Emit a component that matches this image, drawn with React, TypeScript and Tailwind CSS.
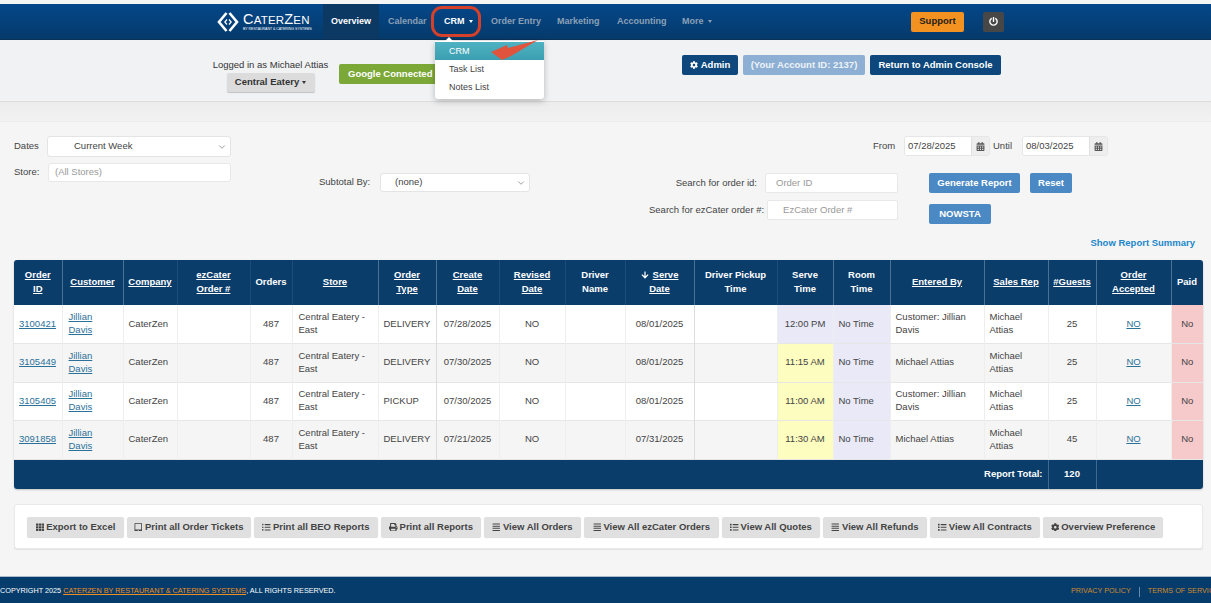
import { FaCog, FaTh, FaPrint, FaListUl, FaAlignJustify, FaList, FaCalendarAlt, FaPowerOff, FaArrowDown, FaTabletAlt } from 'react-icons/fa'
import { ChevronDown } from 'lucide-react'
import type { ReactNode } from 'react'

type Order = {
  id: string
  store: string
  type: string
  created: string
  serveDate: string
  serveTime: string
  enteredBy: string
  guests: string
  serveColor: string
  shaded: boolean
}

const orders: Order[] = [
  { id: '3100421', store: 'Central Eatery - East', type: 'DELIVERY', created: '07/28/2025', serveDate: '08/01/2025', serveTime: '12:00 PM', enteredBy: 'Customer: Jillian Davis', guests: '25', serveColor: 'bg-[#e9e9f7]', shaded: false },
  { id: '3105449', store: 'Central Eatery - East', type: 'DELIVERY', created: '07/30/2025', serveDate: '08/01/2025', serveTime: '11:15 AM', enteredBy: 'Michael Attias', guests: '25', serveColor: 'bg-[#fdfdc0]', shaded: true },
  { id: '3105405', store: 'Central Eatery - East', type: 'PICKUP', created: '07/30/2025', serveDate: '08/01/2025', serveTime: '11:00 AM', enteredBy: 'Customer: Jillian Davis', guests: '25', serveColor: 'bg-[#fdfdc0]', shaded: false },
  { id: '3091858', store: 'Central Eatery - East', type: 'DELIVERY', created: '07/21/2025', serveDate: '07/31/2025', serveTime: '11:30 AM', enteredBy: 'Michael Attias', guests: '45', serveColor: 'bg-[#fdfdc0]', shaded: true },
]

const columns: { label: ReactNode; width: string; link: boolean; strong: boolean }[] = [
  { label: <>Order<br />ID</>, width: 'w-[48px]', link: true, strong: true },
  { label: 'Customer', width: 'w-[61px]', link: true, strong: true },
  { label: 'Company', width: 'w-[54px]', link: true, strong: false },
  { label: <>ezCater<br />Order #</>, width: 'w-[73px]', link: true, strong: false },
  { label: 'Orders', width: 'w-[42px]', link: false, strong: false },
  { label: 'Store', width: 'w-[86px]', link: true, strong: true },
  { label: <>Order<br />Type</>, width: 'w-[58px]', link: true, strong: true },
  { label: <>Create<br />Date</>, width: 'w-[63px]', link: true, strong: false },
  { label: <>Revised<br />Date</>, width: 'w-[66px]', link: true, strong: false },
  { label: <>Driver<br />Name</>, width: 'w-[60px]', link: false, strong: false },
  { label: <><FaArrowDown className="inline text-[8px] mr-1 mb-px" /><u>Serve</u><br /><u>Date</u></>, width: 'w-[69px]', link: false, strong: true },
  { label: <>Driver Pickup<br />Time</>, width: 'w-[83px]', link: false, strong: false },
  { label: <>Serve<br />Time</>, width: 'w-[56px]', link: false, strong: true },
  { label: <>Room<br />Time</>, width: 'w-[57px]', link: false, strong: true },
  { label: 'Entered By', width: 'w-[94px]', link: true, strong: true },
  { label: 'Sales Rep', width: 'w-[64px]', link: true, strong: true },
  { label: '#Guests', width: 'w-[48px]', link: true, strong: true },
  { label: <>Order<br />Accepted</>, width: 'w-[75px]', link: true, strong: true },
  { label: 'Paid', width: 'w-[32px]', link: false, strong: true },
]

const navItems = [
  { label: 'Calendar', cls: 'ml-[9px] w-[38px]' },
  { label: 'Order Entry', cls: 'ml-[17px] w-[48px]' },
  { label: 'Marketing', cls: 'ml-[18px] w-[42px]' },
  { label: 'Accounting', cls: 'ml-[18px] w-[48px]' },
]

const tools: { icon: ReactNode; label: string; width: string }[] = [
  { icon: <FaTh />, label: 'Export to Excel', width: 'w-[97px]' },
  { icon: <FaTabletAlt />, label: 'Print all Order Tickets', width: 'w-[124px]' },
  { icon: <FaListUl />, label: 'Print all BEO Reports', width: 'w-[124px]' },
  { icon: <FaPrint />, label: 'Print all Reports', width: 'w-[100px]' },
  { icon: <FaAlignJustify />, label: 'View All Orders', width: 'w-[97px]' },
  { icon: <FaAlignJustify />, label: 'View All ezCater Orders', width: 'w-[135px]' },
  { icon: <FaList />, label: 'View All Quotes', width: 'w-[98px]' },
  { icon: <FaAlignJustify />, label: 'View All Refunds', width: 'w-[104px]' },
  { icon: <FaList />, label: 'View All Contracts', width: 'w-[110px]' },
  { icon: <FaCog />, label: 'Overview Preference', width: 'w-[120px]' },
]

function Logo() {
  return (
    <div className="flex items-center gap-[4px] w-[93px] font-normal">
      <svg width="22" height="22" viewBox="0 0 22 22" fill="none" stroke="#fff" className="shrink-0">
        <path d="M9.5 2 L2 11 L9.5 20" strokeWidth="2.6" />
        <path d="M12.5 2 L20 11 L12.5 20" strokeWidth="2.6" />
        <path d="M10 8.5 L7.8 11 L10 13.5" strokeWidth="1.2" />
        <path d="M12 8.5 L14.2 11 L12 13.5" strokeWidth="1.2" />
      </svg>
      <div className="text-white leading-none">
        <div className="text-[14.5px] tracking-[0.2px] whitespace-nowrap">C<span className="text-[11.5px]">ATER</span>Z<span className="text-[11.5px]">EN</span></div>
        <div className="text-[3.5px] mt-[2px] whitespace-nowrap">BY RESTAURANT &amp; CATERING SYSTEMS</div>
      </div>
    </div>
  )
}

function NavBar() {
  return (
    <div className="relative h-[36px] mt-[4px] bg-gradient-to-b from-[#04478a] to-[#053a6a] border-b border-[#0a3158] flex items-stretch text-[9px] font-bold text-[#8ba0b6]">
      <div className="ml-[217px] flex items-center"><Logo /></div>
      <div className="ml-[13px] w-[56px] bg-[#0c3864] text-white flex items-center justify-center">Overview</div>
      <div className={`${navItems[0].cls} flex items-center whitespace-nowrap`}>{navItems[0].label}</div>
      <div className="ml-[18px] w-[30px] text-white flex items-center whitespace-nowrap">
        CRM<span className="ml-[4px] border-x-[2.5px] border-x-transparent border-t-[3px] border-t-white" />
      </div>
      {navItems.slice(1).map(item => (
        <div key={item.label} className={`${item.cls} flex items-center whitespace-nowrap`}>{item.label}</div>
      ))}
      <div className="ml-[17px] flex items-center w-[31px]">
        More<span className="ml-[4px] border-x-[2.5px] border-x-transparent border-t-[3px] border-t-[#8ba0b6]" />
      </div>
      <div className="ml-[198px] flex items-center">
        <div className="w-[53px] h-[20px] rounded-[2px] bg-[#f39220] text-[#1d1d1d] flex items-center justify-center text-[9.5px]">Support</div>
      </div>
      <div className="ml-[19px] flex items-center">
        <div className="w-[21px] h-[20px] rounded-[2px] bg-[#474747] text-white flex items-center justify-center text-[9px]"><FaPowerOff /></div>
      </div>
    </div>
  )
}

function CrmMenu() {
  return (
    <div className="absolute left-[435px] top-[41px] w-[109px] h-[58px] bg-white rounded-b-[3px] shadow-[0_2px_6px_rgba(0,0,0,0.25)] text-[9px] text-[#444] z-10 pt-px">
      <div className="h-[18px] bg-gradient-to-b from-[#4fb2c2] to-[#3c9fb1] text-white pl-[14px] pt-px flex items-center">CRM</div>
      <div className="h-[18px] pl-[14px] pt-px flex items-center">Task List</div>
      <div className="h-[18px] pl-[14px] pt-px flex items-center">Notes List</div>
    </div>
  )
}

function Annotations() {
  return (
    <>
      <div className="absolute left-[431px] top-[6px] w-[50px] h-[31px] rounded-[11px] border-[3px] border-[#d5402b] z-20" />
      <div className="absolute left-[445px] top-[37px] border-x-[4px] border-x-transparent border-b-[4px] border-b-white z-10" />
      <svg className="absolute left-[488px] top-[38px] z-20" width="56" height="24" viewBox="0 0 56 24">
        <polygon points="3,14 19,7 20,10 50,2 23,18 14,22" fill="#e0533d" />
      </svg>
    </>
  )
}

function SubHeader() {
  return (
    <div className="h-[62px] bg-[#f1f2f3] border-b border-[#dcdcdc] flex text-[9.5px] text-[#333]">
      <div className="ml-[212px] mt-[19px] w-[117px] flex flex-col items-center">
        <div className="whitespace-nowrap leading-[12px]">Logged in as Michael Attias</div>
        <div className="mt-[2px] w-[88px] h-[19px] rounded-[2px] bg-[#dcdcdc] shadow-[0_1px_1px_rgba(0,0,0,0.2)] font-bold text-[#333] flex items-center justify-center">
          Central Eatery<span className="ml-[3px] border-x-[2.5px] border-x-transparent border-t-[3px] border-t-[#333]" />
        </div>
      </div>
      <div className="ml-[10px] mt-[24px] w-[100px] h-[20px] rounded-[2px] bg-[#7ca838] text-white font-bold flex items-center pl-[9px] whitespace-nowrap">Google Connected</div>
      <div className="ml-[243px] mt-[15px] flex gap-[5px] text-white font-bold">
        <div className="w-[56px] h-[20px] rounded-[2px] bg-[#0d477c] flex items-center justify-center gap-[3px]"><FaCog className="text-[8px]" />Admin</div>
        <div className="w-[122px] h-[20px] rounded-[2px] bg-[#8cafd3] text-[#eef3f8] flex items-center justify-center">(Your Account ID: 2137)</div>
        <div className="w-[131px] h-[20px] rounded-[2px] bg-[#0d477c] flex items-center justify-center">Return to Admin Console</div>
      </div>
    </div>
  )
}

function SelectBox({ value, width, height, pad }: { value: string; width: string; height: string; pad: string }) {
  return (
    <div className={`${width} ${height} ${pad} bg-white rounded-[3px] border border-[#e4e4e4] flex items-center justify-between pr-[3px] text-[#444]`}>
      {value}<ChevronDown size={10} strokeWidth={1.5} className="text-[#666]" />
    </div>
  )
}

function DateInput({ value }: { value: string }) {
  return (
    <div className="w-[86px] h-[20px] flex rounded-[3px] border border-[#e6e6e6] overflow-hidden text-[#444]">
      <div className="flex-1 bg-white pl-[3px] flex items-center">{value}</div>
      <div className="w-[18px] bg-[#eeeeee] border-l border-[#e0e0e0] flex items-center justify-center text-[#555] text-[9px]"><FaCalendarAlt /></div>
    </div>
  )
}

function BlueButton({ label, width }: { label: string; width: string }) {
  return (
    <div className={`${width} h-[20px] rounded-[2px] bg-[#4a89c3] text-white font-bold flex items-center justify-center`}>{label}</div>
  )
}

function Filters() {
  return (
    <div className="h-[114px] flex text-[9.5px] text-[#444]">
      <div className="ml-[14px] w-[217px] pt-[14px]">
        <div className="flex items-center">
          <span className="w-[33px]">Dates</span>
          <SelectBox value="Current Week" width="w-[184px]" height="h-[21px]" pad="pl-[26px]" />
        </div>
        <div className="flex items-center mt-[6px]">
          <span className="w-[34px]">Store:</span>
          <div className="w-[183px] h-[19px] bg-white rounded-[3px] border border-[#e8e8e8] pl-[6px] flex items-center text-[#999]">(All Stores)</div>
        </div>
      </div>
      <div className="ml-[88px] w-[211px] pt-[51px]">
        <div className="flex items-center">
          <span className="w-[61px] whitespace-nowrap">Subtotal By:</span>
          <SelectBox value="(none)" width="w-[150px]" height="h-[19px]" pad="pl-[14px]" />
        </div>
      </div>
      <div className="ml-[119px] w-[546px] pt-[14px]">
        <div className="flex items-center ml-[224px]">
          <span className="w-[31px]">From</span>
          <DateInput value="07/28/2025" />
          <span className="ml-[3px] w-[29px]">Until</span>
          <DateInput value="08/03/2025" />
        </div>
        <div className="flex mt-[17px]">
          <div className="w-[249px] flex items-center justify-end">
            <span className="mr-[8px] whitespace-nowrap">Search for order id:</span>
            <div className="w-[133px] h-[20px] bg-white rounded-[2px] border border-[#e8e8e8] pl-[10px] flex items-center text-[#999]">Order ID</div>
          </div>
          <div className="ml-[31px] flex gap-[10px]">
            <BlueButton label="Generate Report" width="w-[91px]" />
            <BlueButton label="Reset" width="w-[42px]" />
          </div>
        </div>
        <div className="flex mt-[7px]">
          <div className="w-[249px] h-[20px] flex items-center justify-end">
            <span className="mr-[3px] whitespace-nowrap">Search for ezCater order #:</span>
            <div className="w-[133px] h-[20px] bg-white rounded-[2px] border border-[#e8e8e8] pl-[15px] flex items-center text-[#999]">EzCater Order #</div>
          </div>
          <div className="ml-[31px] mt-[4px]">
            <BlueButton label="NOWSTA" width="w-[62px]" />
          </div>
        </div>
      </div>
    </div>
  )
}

function OrdersTable() {
  const cell = 'border-r border-[#eeeeee] px-[5px] pb-[2px] leading-[13px] align-middle'
  return (
    <div className="ml-[14px] mr-[8px] rounded-[3px] overflow-hidden shadow-[0_1px_2px_rgba(0,0,0,0.2)]">
      <table className="table-fixed w-[1189px] text-[9.5px] text-[#444]">
        <colgroup>
          {columns.map((col, i) => <col key={i} className={col.width} />)}
        </colgroup>
        <thead>
          <tr className="h-[45px] bg-[#0b3d6b] text-white font-bold">
            {columns.map((col, i) => (
              <th key={i} className={`px-0 pb-[2px] leading-[13.5px] text-center font-bold border-r ${col.strong ? 'border-[#4a7297]' : 'border-[#1d4c78]'} ${col.link ? 'underline' : ''}`}>{col.label}</th>
            ))}
          </tr>
        </thead>
        <tbody>
          {orders.map(o => (
            <tr key={o.id} className={`h-[38.5px] border-b border-[#e6e6e6] ${o.shaded ? 'bg-[#f5f5f5]' : 'bg-white'}`}>
              <td className={cell}><span className="underline text-[#2b7199]">{o.id}</span></td>
              <td className={`${cell} pl-[6px]`}><span className="underline text-[#2b7199]">Jillian<br />Davis</span></td>
              <td className={cell}>CaterZen</td>
              <td className={cell} />
              <td className={`${cell} text-center`}>487</td>
              <td className={`${cell} pl-[6px]`}>{o.store}</td>
              <td className={`${cell} border-r-[#dcdcdc]`}>{o.type}</td>
              <td className={`${cell} text-center`}>{o.created}</td>
              <td className={`${cell} text-center`}>NO</td>
              <td className={cell} />
              <td className={`${cell} text-center border-r-[#dcdcdc]`}>{o.serveDate}</td>
              <td className={cell} />
              <td className={`${cell} text-center ${o.serveColor}`}>{o.serveTime}</td>
              <td className={`${cell} bg-[#e9e9f7]`}>No Time</td>
              <td className={cell}>{o.enteredBy}</td>
              <td className={cell}>Michael Attias</td>
              <td className={`${cell} text-center`}>{o.guests}</td>
              <td className={`${cell} text-center`}><span className="underline text-[#2b7199]">NO</span></td>
              <td className={`${cell} px-0 text-center bg-[#f6c9cb] border-r-0`}>No</td>
            </tr>
          ))}
          <tr className="h-[30px] bg-[#0b3d6b] text-white font-bold border-t border-[#a9bccd]">
            <td colSpan={16} className="text-right pr-[5px] border-r border-[#3d6a93]">Report Total:</td>
            <td className="text-center border-r border-[#3d6a93]">120</td>
            <td colSpan={2} />
          </tr>
        </tbody>
      </table>
    </div>
  )
}

function Toolbar() {
  return (
    <div className="mt-[15px] ml-[14px] mr-[8px] h-[45px] bg-white rounded-[3px] border border-[#e9e9e9] shadow-[0_1px_1px_rgba(0,0,0,0.08)] pl-[12px] pt-[12px] flex gap-[3px]">
      {tools.map(t => (
        <div key={t.label} className={`${t.width} h-[20px] bg-[#e0e0e0] rounded-[2px] shadow-[0_1px_1px_rgba(0,0,0,0.15)] flex items-center justify-center gap-[2px] text-[9.5px] font-bold text-[#444] whitespace-nowrap`}>
          <span className="text-[8.5px]">{t.icon}</span>{t.label}
        </div>
      ))}
    </div>
  )
}

function Footer() {
  return (
    <div className="mt-[27px] h-[27px] pt-[3px] bg-[#053c6b] border-t border-[#a9bccd] flex items-center justify-between text-[7.25px] text-white whitespace-nowrap overflow-hidden">
      <div>COPYRIGHT 2025 <span className="underline text-[#ec8f1f]">CATERZEN BY RESTAURANT &amp; CATERING SYSTEMS</span>, ALL RIGHTS RESERVED.</div>
      <div className="flex items-center text-[#d08a2b] w-[140px] shrink-0">
        <span>PRIVACY POLICY</span>
        <span className="mx-[8px] h-[10px] border-l border-[#6b8aa6]" />
        <span>TERMS OF SERVICE</span>
      </div>
    </div>
  )
}

export default function App() {
  return (
    <div className="relative w-[1211px] h-[603px] overflow-hidden bg-[#f5f5f5] font-['Liberation_Sans',Arial,sans-serif]">
      <NavBar />
      <SubHeader />
      <div className="h-[20px] bg-gradient-to-b from-[#ececec] to-[#f2f2f2] border-b border-[#ececec]" />
      <Filters />
      <div className="h-[24px] flex justify-end pr-[16px] text-[9.5px] font-bold text-[#1c87c9]">Show Report Summary</div>
      <OrdersTable />
      <Toolbar />
      <Footer />
      <CrmMenu />
      <Annotations />
    </div>
  )
}
